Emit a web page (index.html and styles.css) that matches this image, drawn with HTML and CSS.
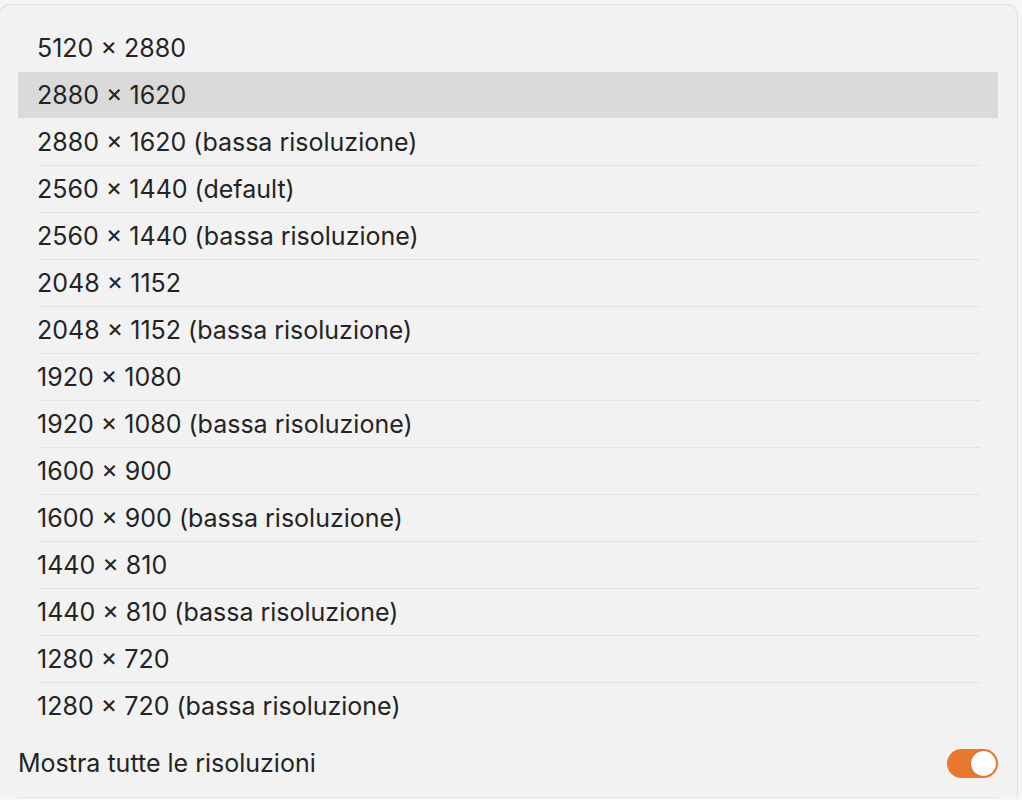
FILE: index.html
```html
<!DOCTYPE html>
<html lang="it">
<head>
  <meta charset="UTF-8" />
  <meta name="viewport" content="width=device-width, initial-scale=1.0"/>
  <title>Risoluzioni</title>
  <link rel="stylesheet" href="styles.css">
</head>
<body>
  <div class="panel">
    <ul class="res-list">
      <li class="res">5120 × 2880</li>
      <li class="res selected">2880 × 1620</li>
      <li class="res after-selected">2880 × 1620 (bassa risoluzione)</li>
      <li class="res">2560 × 1440 (default)</li>
      <li class="res">2560 × 1440 (bassa risoluzione)</li>
      <li class="res">2048 × 1152</li>
      <li class="res">2048 × 1152 (bassa risoluzione)</li>
      <li class="res">1920 × 1080</li>
      <li class="res">1920 × 1080 (bassa risoluzione)</li>
      <li class="res">1600 × 900</li>
      <li class="res">1600 × 900 (bassa risoluzione)</li>
      <li class="res">1440 × 810</li>
      <li class="res">1440 × 810 (bassa risoluzione)</li>
      <li class="res">1280 × 720</li>
      <li class="res">1280 × 720 (bassa risoluzione)</li>
    </ul>

    <div class="toggle-row">
      <span>Mostra tutte le risoluzioni</span>
      <div class="switch on"><div class="knob"></div></div>
    </div>
  </div>
</body>
</html>
```

FILE: styles.css
```css
body {
  margin: 0;
  padding-top: 4px;
  background: #f6f6f6;
  font-family: "Inter", "Noto Sans", sans-serif;
  color: #242424;
  overflow: hidden;
}

.panel {
  box-sizing: border-box;
  width: 1019px;
  margin-left: -1px;
  padding: 19px 19px 0 18px;
  background: #f2f2f2;
  border: 1px solid #e1e1e1;
  border-bottom: none;
  border-radius: 11px 11px 0 0;
}

.res-list {
  list-style: none;
  margin: 0;
  padding: 0;
}

.res {
  height: 47px;
  box-sizing: border-box;
  padding: 1px 0 0 19px;
  display: flex;
  align-items: center;
  font-size: 25px;
  background: linear-gradient(#e3e3e3, #e3e3e3) 20px 0 / calc(100% - 38px) 1px no-repeat;
}

.res:first-child,
.res.after-selected {
  background: none;
}

.res.selected {
  background: #dadada content-box;
  padding-left: 0;
  text-indent: 19px;
}

.toggle-row {
  height: 68px;
  display: flex;
  align-items: center;
  justify-content: space-between;
  font-size: 25px;
  border-bottom: 1px solid #e1e1e1;
}

.switch {
  width: 51px;
  height: 29px;
  box-sizing: border-box;
  border-radius: 15px;
  background: #e8782f;
  padding: 2px;
  display: flex;
  justify-content: flex-end;
}

.knob {
  width: 25px;
  height: 25px;
  border-radius: 50%;
  background: #fff;
  box-shadow: 0 0 1px rgba(0, 0, 0, 0.35);
}
```
